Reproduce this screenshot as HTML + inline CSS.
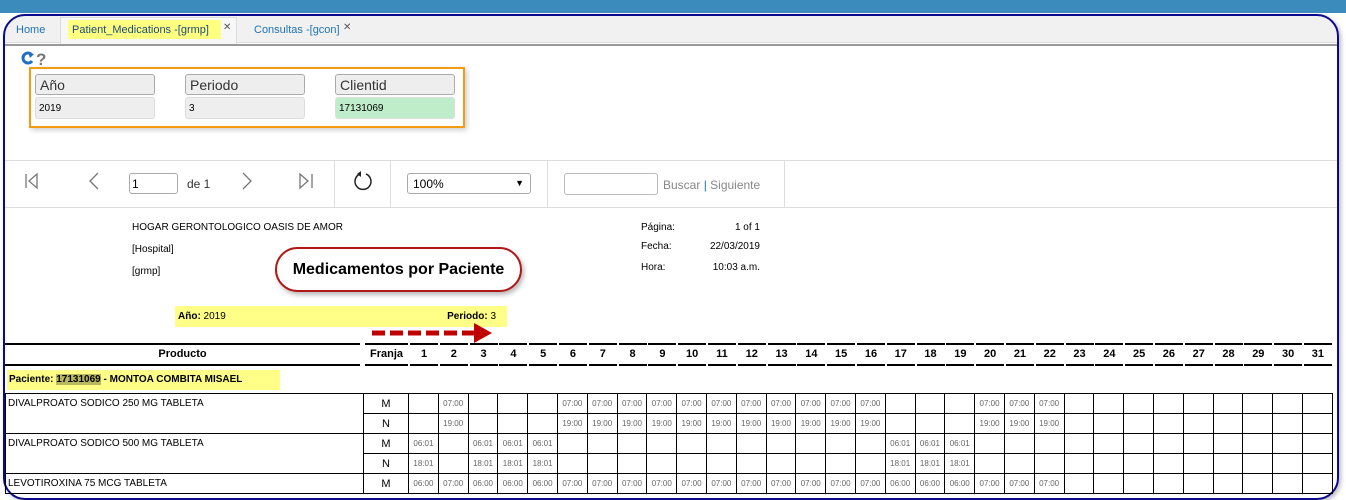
<!DOCTYPE html>
<html><head><meta charset="utf-8"><style>
*{box-sizing:border-box;margin:0;padding:0}
html,body{width:1346px;height:500px;overflow:hidden}
body{background:#fff;font-family:"Liberation Sans",Arial,sans-serif;position:relative}
.a{position:absolute}
.top{left:0;top:0;width:1346px;height:13px;background:#3b8bbd}
.frame{left:3px;top:14px;width:1336px;height:486px;border:2px solid #0a0a8c;border-radius:22px;box-shadow:2px 2px 4px #bbb}
.tabs{left:5px;top:16px;width:1332px;height:27px;background:#f1f1f1;border-bottom:1px solid #ddd;border-radius:18px 18px 0 0}
.sep{left:5px;top:44px;width:1332px;height:2px;background:#999}
.tab{font-size:11px;color:#1f73b7}
.lbl{height:21px;border:1px solid #aaa;border-radius:3px;background:#eee;font-size:14px;color:#333;padding:2px 4px;width:120px}
.val{height:22px;border:1px solid #ddd;border-radius:3px;background:#eee;font-size:10px;color:#000;padding:5px 3px;width:120px}
.hl{height:1px;background:#ddd;left:5px;width:1332px}
.t{font-size:10px;color:#000}
table{border-collapse:collapse;table-layout:fixed;position:absolute;left:5px;top:393px}
td{border:1px solid #000;height:20px;font-size:8px;color:#666;text-align:center;padding:0}
td.p{font-size:10px;color:#000;text-align:left;vertical-align:top;padding:4px 2px}
td.f{font-size:11px;color:#000}
.hd{top:343px;height:23px;border-top:2px solid #000;border-bottom:2px solid #000;font-size:11px;font-weight:bold;text-align:center;line-height:19px}
.days span{width:28px;margin-right:1.8px;text-align:center;border-top:2px solid #000;border-bottom:2px solid #000;height:23px;line-height:19px}
</style></head><body>
<div class="a top"></div>
<div class="a tabs"></div>
<div class="a sep"></div>
<div class="a frame"></div>
<div class="a tab" style="left:16px;top:24px">Home</div>
<div class="a" style="left:60px;top:17px;width:177px;height:27px;background:#f7f7f7;border:1px solid #ddd;border-bottom:none"></div>
<div class="a" style="left:68px;top:20px;width:153px;height:19px;background:#ffff80"></div>
<div class="a tab" style="left:72px;top:24px;color:#1a4a7a">Patient_Medications -[grmp]</div>
<div class="a" style="left:223px;top:22px;font-size:10px;color:#555">✕</div>
<div class="a tab" style="left:254px;top:24px">Consultas -[gcon]</div>
<div class="a" style="left:343px;top:22px;font-size:10px;color:#555">✕</div>
<svg class="a" style="left:20px;top:50px" width="32" height="18"><path d="M11 4 A5 5 0 1 0 12 11" fill="none" stroke="#1f6fc5" stroke-width="3"/><path d="M8 2 L14 4 L10 8Z" fill="#1f6fc5"/><text x="16" y="15" font-size="17" font-weight="bold" fill="#777" font-family="Liberation Sans">?</text></svg>
<div class="a" style="left:29px;top:67px;width:436px;height:61px;border:2px solid #f39c12;box-shadow:2px 2px 5px #ccc"></div>
<div class="a lbl" style="left:35px;top:74px">Año</div><div class="a val" style="left:35px;top:97px">2019</div>
<div class="a lbl" style="left:185px;top:74px">Periodo</div><div class="a val" style="left:185px;top:97px">3</div>
<div class="a lbl" style="left:335px;top:74px">Clientid</div><div class="a val" style="left:335px;top:97px;background:#bfedc9">17131069</div>
<div class="a hl" style="top:160px"></div><div class="a hl" style="top:207px"></div>
<div class="a" style="left:334px;top:161px;width:1px;height:46px;background:#ddd"></div>
<div class="a" style="left:390px;top:161px;width:1px;height:46px;background:#ddd"></div>
<div class="a" style="left:547px;top:161px;width:1px;height:46px;background:#ddd"></div>
<div class="a" style="left:784px;top:161px;width:1px;height:46px;background:#ddd"></div>
<svg class="a" style="left:20px;top:170px" width="320" height="24" fill="none" stroke="#777" stroke-width="1.3"><path d="M6 4v14M17 4 L9 11 L17 18Z"/><path d="M78 3 L70 11 L78 19"/><path d="M223 3 L231 11 L223 19"/><path d="M280 4 L288 11 L280 18Z M292 4v14"/></svg>
<div class="a" style="left:129px;top:173px;width:49px;height:21px;border:1px solid #aaa;border-radius:3px;font-size:12px;padding:3px 2px">1</div>
<div class="a" style="left:187px;top:177px;font-size:12px;color:#333">de 1</div>
<svg class="a" style="left:351px;top:169px" width="24" height="24"><path d="M9 5 A8 8 0 1 0 15 5" fill="none" stroke="#222" stroke-width="1.5"/><path d="M10 2 L10 8 L6 5Z" fill="#222"/></svg>
<div class="a" style="left:407px;top:173px;width:124px;height:21px;border:1px solid #aaa;border-radius:3px;font-size:12px;padding:3px 5px">100%<span style="position:absolute;right:6px;top:4px;font-size:9px">▼</span></div>
<div class="a" style="left:564px;top:173px;width:94px;height:22px;border:1px solid #bbb;border-radius:3px"></div>
<div class="a" style="left:663px;top:178px;font-size:12px;color:#888">Buscar <span style="color:#1f73b7">|</span> Siguiente</div>
<div class="a t" style="left:132px;top:222px">HOGAR GERONTOLOGICO OASIS DE AMOR</div>
<div class="a t" style="left:132px;top:244px">[Hospital]</div>
<div class="a t" style="left:132px;top:266px">[grmp]</div>
<div class="a t" style="left:641px;top:222px">Página:</div><div class="a t" style="left:680px;top:222px;width:80px;text-align:right">1 of 1</div>
<div class="a t" style="left:641px;top:241px">Fecha:</div><div class="a t" style="left:680px;top:241px;width:80px;text-align:right">22/03/2019</div>
<div class="a t" style="left:641px;top:262px">Hora:</div><div class="a t" style="left:680px;top:262px;width:80px;text-align:right">10:03 a.m.</div>
<div class="a" style="left:275px;top:247px;width:247px;height:45px;border:2px solid #b01818;border-radius:23px;box-shadow:2px 3px 5px #bbb;font-size:16px;font-weight:bold;text-align:center;line-height:41px">Medicamentos por Paciente</div>
<div class="a" style="left:175px;top:306px;width:332px;height:21px;background:#ffff88;font-size:10px;font-weight:bold;padding:5px 3px">Año: <span style="font-weight:normal">2019</span><span style="position:absolute;right:11px">Periodo: <span style="font-weight:normal">3</span></span></div>
<svg class="a" style="left:370px;top:321px" width="125" height="22"><path d="M2 12 H105" stroke="#c00000" stroke-width="5" stroke-dasharray="13 5"/><path d="M104 2 L122 12 L104 22Z" fill="#c00000"/></svg>
<div class="a hd" style="left:5px;width:355px">Producto</div>
<div class="a hd" style="left:365px;width:43px">Franja</div>
<div class="a days" style="left:410px;top:343px;width:935px;height:23px;display:flex;font-size:11px;font-weight:bold">
<span>1</span><span>2</span><span>3</span><span>4</span><span>5</span><span>6</span><span>7</span><span>8</span><span>9</span><span>10</span><span>11</span><span>12</span><span>13</span><span>14</span><span>15</span><span>16</span><span>17</span><span>18</span><span>19</span><span>20</span><span>21</span><span>22</span><span>23</span><span>24</span><span>25</span><span>26</span><span>27</span><span>28</span><span>29</span><span>30</span><span>31</span></div>
<div class="a" style="left:7px;top:370px;width:273px;height:20px;background:#ffff88;font-size:10px;font-weight:bold;padding:4px 2px">Paciente: <span style="background:#b8b860">17131069</span> - MONTOA COMBITA MISAEL</div>
<table style="width:1327px">
<colgroup><col style="width:358px"><col style="width:45px"><col span="31" style="width:29.8px"></colgroup>
<tr><td class="p" rowspan="2">DIVALPROATO SODICO 250 MG TABLETA</td><td class="f">M</td><td></td><td>07:00</td><td></td><td></td><td></td><td>07:00</td><td>07:00</td><td>07:00</td><td>07:00</td><td>07:00</td><td>07:00</td><td>07:00</td><td>07:00</td><td>07:00</td><td>07:00</td><td>07:00</td><td></td><td></td><td></td><td>07:00</td><td>07:00</td><td>07:00</td><td></td><td></td><td></td><td></td><td></td><td></td><td></td><td></td><td></td></tr>
<tr><td class="f">N</td><td></td><td>19:00</td><td></td><td></td><td></td><td>19:00</td><td>19:00</td><td>19:00</td><td>19:00</td><td>19:00</td><td>19:00</td><td>19:00</td><td>19:00</td><td>19:00</td><td>19:00</td><td>19:00</td><td></td><td></td><td></td><td>19:00</td><td>19:00</td><td>19:00</td><td></td><td></td><td></td><td></td><td></td><td></td><td></td><td></td><td></td></tr>
<tr><td class="p" rowspan="2">DIVALPROATO SODICO 500 MG TABLETA</td><td class="f">M</td><td>06:01</td><td></td><td>06:01</td><td>06:01</td><td>06:01</td><td></td><td></td><td></td><td></td><td></td><td></td><td></td><td></td><td></td><td></td><td></td><td>06:01</td><td>06:01</td><td>06:01</td><td></td><td></td><td></td><td></td><td></td><td></td><td></td><td></td><td></td><td></td><td></td><td></td></tr>
<tr><td class="f">N</td><td>18:01</td><td></td><td>18:01</td><td>18:01</td><td>18:01</td><td></td><td></td><td></td><td></td><td></td><td></td><td></td><td></td><td></td><td></td><td></td><td>18:01</td><td>18:01</td><td>18:01</td><td></td><td></td><td></td><td></td><td></td><td></td><td></td><td></td><td></td><td></td><td></td><td></td></tr>
<tr><td class="p">LEVOTIROXINA 75 MCG TABLETA</td><td class="f">M</td><td>06:00</td><td>07:00</td><td>06:00</td><td>06:00</td><td>06:00</td><td>07:00</td><td>07:00</td><td>07:00</td><td>07:00</td><td>07:00</td><td>07:00</td><td>07:00</td><td>07:00</td><td>07:00</td><td>07:00</td><td>07:00</td><td>06:00</td><td>06:00</td><td>06:00</td><td>07:00</td><td>07:00</td><td>07:00</td><td></td><td></td><td></td><td></td><td></td><td></td><td></td><td></td><td></td></tr>
</table>
</body></html>
